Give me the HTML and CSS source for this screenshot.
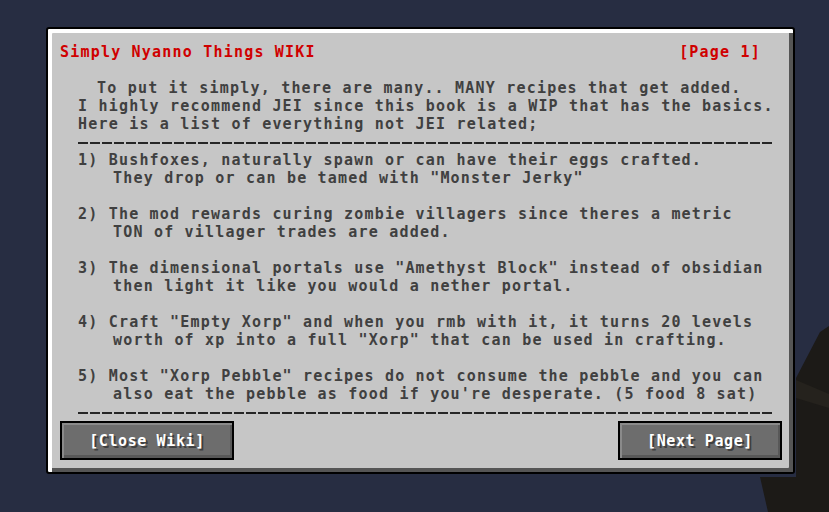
FILE: index.html
```html
<!DOCTYPE html>
<html lang="en">
<head>
  <meta charset="UTF-8" />
  <meta name="viewport" content="width=device-width, initial-scale=1.0" />
  <title>Simply Nyanno Things WIKI</title>
  <link rel="stylesheet" href="styles.css">
</head>
<body>

<!-- bit of the world showing behind the book -->
<svg class="scenery" width="829" height="512" viewBox="0 0 829 512">
  <polygon points="829,326 820,332 796,378 796,477 760,477 768,512 829,512" fill="#1c1a17" />
  <polygon points="796,380 829,394 829,408 796,398" fill="#25221d" />
</svg>

<div id="wiki-panel">
  <div class="wiki-head">
    <span class="wiki-title">Simply Nyanno Things WIKI</span>
    <span class="wiki-page">[Page 1]</span>
  </div>

  <div class="wiki-body">
    <p class="line first">To put it simply, there are many.. MANY recipes that get added.</p>
    <p class="line">I highly recommend JEI since this book is a WIP that has the basics.</p>
    <p class="line">Here is a list of everything not JEI related;</p>
    <div class="rule"></div>

    <ul class="entries">
      <li>
        <p class="line">1) Bushfoxes, naturally spawn or can have their eggs crafted.</p>
        <p class="line cont">They drop or can be tamed with "Monster Jerky"</p>
      </li>
      <li>
        <p class="line">2) The mod rewards curing zombie villagers since theres a metric</p>
        <p class="line cont">TON of villager trades are added.</p>
      </li>
      <li>
        <p class="line">3) The dimensional portals use "Amethyst Block" instead of obsidian</p>
        <p class="line cont">then light it like you would a nether portal.</p>
      </li>
      <li>
        <p class="line">4) Craft "Empty Xorp" and when you rmb with it, it turns 20 levels</p>
        <p class="line cont">worth of xp into a full "Xorp" that can be used in crafting.</p>
      </li>
      <li>
        <p class="line">5) Most "Xorp Pebble" recipes do not consume the pebble and you can</p>
        <p class="line cont">also eat the pebble as food if you're desperate. (5 food 8 sat)</p>
      </li>
    </ul>
    <div class="rule"></div>
  </div>

  <div class="wiki-actions">
    <button class="mc-button">[Close Wiki]</button>
    <button class="mc-button">[Next Page]</button>
  </div>
</div>

</body>
</html>
```

FILE: styles.css
```css
html, body {
  margin: 0;
  background-color: #272d42;
}
body {
  position: relative;
  width: 829px;
  height: 512px;
  overflow: hidden;
  font-family: 'DejaVu Sans Mono', 'Liberation Mono', monospace;
  font-size: 15px;
  font-weight: bold;
  letter-spacing: 1.2px;
  line-height: 18px;
  color: #404040;
}
.scenery {
  position: absolute;
  left: 0;
  top: 0;
}
#wiki-panel {
  position: relative;
  box-sizing: border-box;
  width: 749px;
  margin: 27px 0 0 46px;
  padding: 14px 11px 12px 12px;
  background: #c6c6c6;
  border: 2px solid #000;
  border-radius: 3px;
  box-shadow: inset 4px 4px 0 #ffffff, inset -4px -4px 0 #555555;
}
.wiki-head {
  display: flex;
  justify-content: space-between;
  padding-right: 21px;
  color: #d00000;
}
.wiki-body {
  margin: 18px 0 0 18px;
}
.line {
  margin: 0;
  white-space: pre;
}
.line.first {
  padding-left: 19px;
}
.line.cont {
  padding-left: 35px;
}
.rule {
  width: 694px;
  height: 2px;
  margin: 9px 0 7px;
  background: repeating-linear-gradient(to right, #262626 0 10px, transparent 10px 12px);
}
.entries {
  list-style: none;
  margin: 0;
  padding: 0;
}
.entries li {
  margin-bottom: 18px;
}
.entries li:last-child {
  margin-bottom: 0;
}
.wiki-actions {
  display: flex;
  justify-content: space-between;
  margin-top: 3px;
}
.mc-button {
  box-sizing: border-box;
  height: 39px;
  padding: 0;
  font-family: inherit;
  font-size: 15px;
  font-weight: bold;
  letter-spacing: 0.6px;
  color: #ffffff;
  text-shadow: 2px 2px 0 #3f3f3f;
  background: #6d6d6d;
  border: 2px solid #000;
  box-shadow: inset 2px 2px 0 #8a8a8a, inset -2px -3px 0 #585858;
}
.mc-button:first-child {
  width: 174px;
}
.mc-button:last-child {
  width: 164px;
}
```
